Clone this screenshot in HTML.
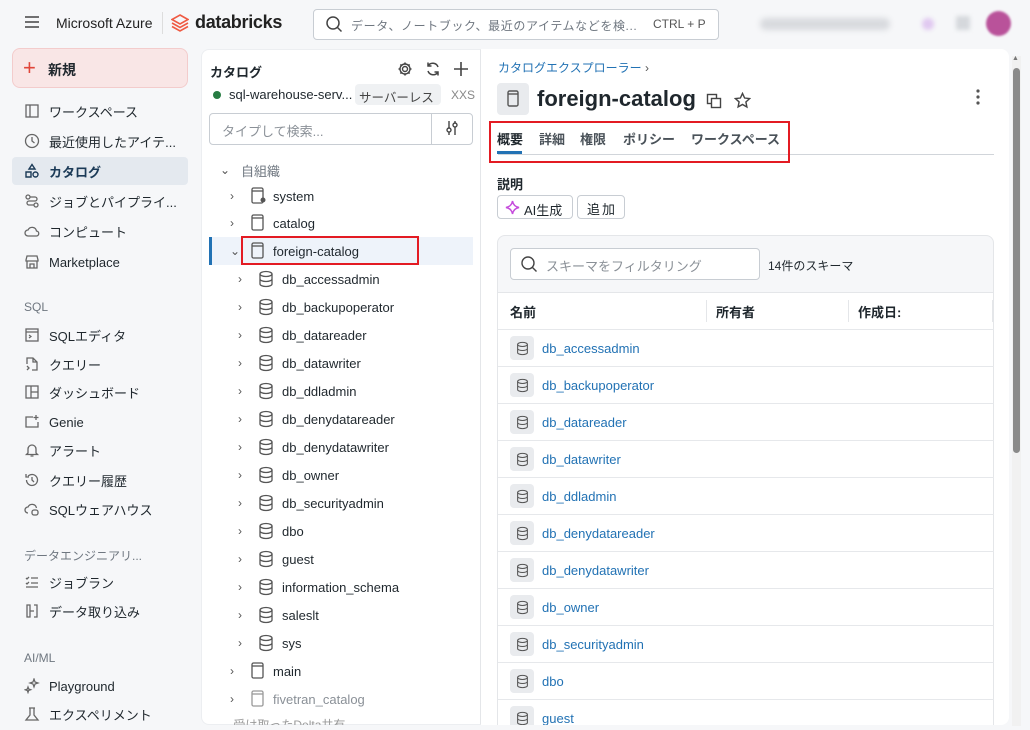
<!DOCTYPE html>
<html><head><meta charset="utf-8"><style>
*{box-sizing:border-box;margin:0;padding:0}
html,body{width:1030px;height:730px;overflow:hidden}
body{background:#f6f7f9;font-family:"Liberation Sans","Noto Sans CJK JP",sans-serif;font-size:13px;color:#1f272d;position:relative}
.a{position:absolute}
.nav{position:absolute;left:12px;width:176px;height:28px;display:flex;align-items:center;padding-left:12px;gap:9px;font-size:13px;color:#1f272d}
.nav svg{width:16px;height:16px;flex:none}
.sec{position:absolute;left:24px;font-size:12px;color:#6f7780}
.tr{position:absolute;height:28px;display:flex;align-items:center;font-size:13px;color:#1f272d;white-space:nowrap}
.chev{width:21px;color:#555;font-size:12px;flex:none}
.ico{width:22px;display:flex;flex:none}
.row{position:absolute;left:0;width:496px;height:37px;border-top:1px solid #e6e8eb;display:flex;align-items:center;padding-left:12px}
.row .ic{width:24px;height:24px;background:#e9ebee;border-radius:4px;margin-right:8px;display:flex;align-items:center;justify-content:center}
.row span{color:#2272b4;font-size:13px}
</style></head><body>
<svg class="a" style="left:25px;top:16px" width="14" height="12"><path d="M0 1h14M0 6h14M0 11h14" stroke="#444" stroke-width="1.5"/></svg>
<div class="a" style="left:56px;top:15px;font-size:14px;color:#222">Microsoft Azure</div>
<div class="a" style="left:162px;top:12px;width:1px;height:22px;background:#ddd"></div>
<svg class="a" style="left:171px;top:14px" width="18" height="18" viewBox="0 0 18 18"><path d="M9 1L17 5.5 9 10 1 5.5Z M1 9l8 4.5 8-4.5 M1 12.5l8 4.5 8-4.5" fill="none" stroke="#ef5a43" stroke-width="1.6"/></svg>
<div class="a" style="left:195px;top:12px;font-size:18px;font-weight:bold;color:#222;letter-spacing:-0.3px">databricks</div>
<div class="a" style="left:313px;top:9px;width:406px;height:31px;background:#fff;border:1px solid #c8cdd3;border-radius:4px"></div>
<svg class="a" style="left:326px;top:16px" width="17" height="17"><circle cx="7" cy="7" r="6" fill="none" stroke="#444" stroke-width="1.5"/><path d="M11.5 11.5l4 4" stroke="#444" stroke-width="1.5"/></svg>
<div class="a" style="left:351px;top:17px;font-size:12px;color:#6f7780;letter-spacing:0.6px">データ、ノートブック、最近のアイテムなどを検...</div>
<div class="a" style="left:653px;top:17px;font-size:12px;color:#555">CTRL + P</div>
<div class="a" style="left:760px;top:18px;width:130px;height:12px;background:#d8dade;border-radius:6px;filter:blur(3px)"></div>
<div class="a" style="left:922px;top:18px;width:12px;height:12px;background:#e0c8f0;border-radius:6px;filter:blur(2px)"></div>
<div class="a" style="left:956px;top:16px;width:14px;height:14px;background:#d5d8dc;border-radius:2px;filter:blur(2px)"></div>
<div class="a" style="left:986px;top:11px;width:25px;height:25px;background:#b9529a;border-radius:50%;filter:blur(1px)"></div>

<div class="a" style="left:12px;top:48px;width:176px;height:40px;background:#f9e6e6;border:1px solid #f3cccc;border-radius:8px"></div>
<div class="a" style="left:23px;top:55px;font-size:22px;color:#e0463a;font-weight:300">+</div>
<div class="a" style="left:48px;top:60px;font-size:14px;font-weight:bold">新規</div>
<div class="nav" style="top:97px"><svg viewBox="0 0 16 16"><rect x="2" y="2" width="12" height="12" fill="none" stroke="#666" stroke-width="1.3"/><path d="M6 2v12" stroke="#666" stroke-width="1.3"/></svg>ワークスペース</div>
<div class="nav" style="top:127px"><svg viewBox="0 0 16 16"><circle cx="8" cy="8" r="6.5" fill="none" stroke="#666" stroke-width="1.3"/><path d="M8 4v4l2.5 2" fill="none" stroke="#666" stroke-width="1.3"/></svg>最近使用したアイテ...</div>
<div class="nav" style="top:157px;background:#e4e9ef;border-radius:4px;font-weight:bold;color:#1b3a57"><svg viewBox="0 0 16 16"><path d="M8 1.5l3 4.5H5z M2 9h5v5H2z" fill="none" stroke="#1b3a57" stroke-width="1.4"/><circle cx="11.5" cy="11.5" r="2.5" fill="none" stroke="#1b3a57" stroke-width="1.4"/></svg>カタログ</div>
<div class="nav" style="top:187px"><svg viewBox="0 0 16 16"><circle cx="4" cy="4" r="2" fill="none" stroke="#666" stroke-width="1.3"/><circle cx="12" cy="12" r="2" fill="none" stroke="#666" stroke-width="1.3"/><path d="M6 4h5a2 2 0 010 4H5a2 2 0 000 4h5" fill="none" stroke="#666" stroke-width="1.3"/></svg>ジョブとパイプライ...</div>
<div class="nav" style="top:217px"><svg viewBox="0 0 16 16"><path d="M4 13a3 3 0 010-6 4.5 4.5 0 018.5 1A2.5 2.5 0 0112 13z" fill="none" stroke="#666" stroke-width="1.3"/></svg>コンピュート</div>
<div class="nav" style="top:248px"><svg viewBox="0 0 16 16"><path d="M2 6l1-4h10l1 4v1H2zM3 7v7h10V7M6 14v-4h4v4" fill="none" stroke="#666" stroke-width="1.3"/></svg>Marketplace</div>
<div class="sec" style="top:300px">SQL</div>
<div class="nav" style="top:321px"><svg viewBox="0 0 16 16"><rect x="2" y="2" width="12" height="12" fill="none" stroke="#666" stroke-width="1.3"/><path d="M2 5h12M5 8l2 1.5L5 11" fill="none" stroke="#666" stroke-width="1.2"/></svg>SQLエディタ</div>
<div class="nav" style="top:350px"><svg viewBox="0 0 16 16"><path d="M3 8V2h6l4 4v8H8M9 2v4h4M3 10l2 2-2 2" fill="none" stroke="#666" stroke-width="1.3"/></svg>クエリー</div>
<div class="nav" style="top:378px"><svg viewBox="0 0 16 16"><rect x="2" y="2" width="12" height="12" fill="none" stroke="#666" stroke-width="1.3"/><path d="M7 2v12M7 8h7" stroke="#666" stroke-width="1.3"/></svg>ダッシュボード</div>
<div class="nav" style="top:408px"><svg viewBox="0 0 16 16"><path d="M9 3H2v10h12V8M12 1v5M9.5 3.5h5" fill="none" stroke="#666" stroke-width="1.3"/></svg>Genie</div>
<div class="nav" style="top:436px"><svg viewBox="0 0 16 16"><path d="M4 11V7a4 4 0 018 0v4l1.5 1.5h-11zM6.5 14h3" fill="none" stroke="#666" stroke-width="1.3"/></svg>アラート</div>
<div class="nav" style="top:466px"><svg viewBox="0 0 16 16"><path d="M2.5 8a5.5 5.5 0 101.6-3.9M2 2v3h3M8 5v3l2 2" fill="none" stroke="#666" stroke-width="1.3"/></svg>クエリー履歴</div>
<div class="nav" style="top:495px"><svg viewBox="0 0 16 16"><path d="M4 12a3 3 0 010-6 4.5 4.5 0 018.5 1" fill="none" stroke="#666" stroke-width="1.3"/><rect x="8" y="9" width="6" height="5" rx="2" fill="none" stroke="#666" stroke-width="1.3"/></svg>SQLウェアハウス</div>
<div class="sec" style="top:547px">データエンジニアリ...</div>
<div class="nav" style="top:568px"><svg viewBox="0 0 16 16"><path d="M2 4l1 1 2-2M7 4h7M2 9l1 1 2-2M7 9h7M2 13h12" fill="none" stroke="#666" stroke-width="1.3"/></svg>ジョブラン</div>
<div class="nav" style="top:597px"><svg viewBox="0 0 16 16"><path d="M3 2h3v12H3zM10 2h3v12h-3M6 8h4" fill="none" stroke="#666" stroke-width="1.3"/></svg>データ取り込み</div>
<div class="sec" style="top:651px">AI/ML</div>
<div class="nav" style="top:672px"><svg viewBox="0 0 16 16"><path d="M10 1l1 3 3 1-3 1-1 3-1-3-3-1 3-1zM4 9l.7 2 2 .7-2 .7L4 14.5l-.7-2-2-.7 2-.7z" fill="none" stroke="#666" stroke-width="1.2"/></svg>Playground</div>
<div class="nav" style="top:700px"><svg viewBox="0 0 16 16"><path d="M5 2h6M6 2v7l-4 5h12l-4-5V2" fill="none" stroke="#666" stroke-width="1.3"/></svg>エクスペリメント</div>

<div class="a" style="left:201px;top:49px;width:280px;height:676px;background:#fff;border-radius:8px 0 0 8px;border:1px solid #eceef1;border-right:1px solid #e4e6e9"></div>
<div class="a" style="left:210px;top:62px;font-size:13px;font-weight:bold">カタログ</div>
<svg class="a" style="left:397px;top:61px" width="16" height="16" viewBox="0 0 16 16"><circle cx="8" cy="8" r="2.5" fill="none" stroke="#444" stroke-width="1.4"/><path d="M8 1.5v2M8 12.5v2M1.5 8h2M12.5 8h2M3.4 3.4l1.4 1.4M11.2 11.2l1.4 1.4M3.4 12.6l1.4-1.4M11.2 4.8l1.4-1.4" stroke="#444" stroke-width="1.6"/><circle cx="8" cy="8" r="5" fill="none" stroke="#444" stroke-width="1.4"/></svg>
<svg class="a" style="left:425px;top:61px" width="16" height="16" viewBox="0 0 16 16"><path d="M13 6a5.5 5.5 0 00-10-1M3 10a5.5 5.5 0 0010 1M3 1.5V5h3.5M13 14.5V11H9.5" fill="none" stroke="#444" stroke-width="1.5"/></svg>
<svg class="a" style="left:453px;top:61px" width="16" height="16"><path d="M8 1v14M1 8h14" stroke="#444" stroke-width="1.6"/></svg>
<div class="a" style="left:213px;top:91px;width:8px;height:8px;border-radius:50%;background:#277c43"></div>
<div class="a" style="left:229px;top:87px;font-size:13px">sql-warehouse-serv...</div>
<div class="a" style="left:355px;top:84px;width:86px;height:21px;background:#eff1f3;border-radius:4px;font-size:12.5px;color:#444;padding:3px 4px;white-space:nowrap;overflow:hidden">サーバーレス</div>
<div class="a" style="left:451px;top:88px;font-size:12px;color:#888">XXS</div>
<div class="a" style="left:209px;top:113px;width:264px;height:32px;border:1px solid #c8cdd3;border-radius:4px"></div>
<div class="a" style="left:431px;top:114px;width:1px;height:30px;background:#c8cdd3"></div>
<div class="a" style="left:222px;top:121px;font-size:13px;color:#8a9097">タイプして検索...</div>
<svg class="a" style="left:445px;top:120px" width="14" height="16"><path d="M4 1v14M10 1v14" stroke="#444" stroke-width="1.4"/><circle cx="4" cy="10" r="2" fill="#fff" stroke="#444" stroke-width="1.4"/><circle cx="10" cy="5" r="2" fill="#fff" stroke="#444" stroke-width="1.4"/></svg>
<div class="tr" style="left:220px;top:156px"><span class="chev" style="width:21px">⌄</span><span style="color:#6f7780">自組織</span></div>
<div class="tr" style="left:230px;top:182px"><span class="chev">›</span><span class="ico"><svg width="16" height="18"><rect x="1" y="1" width="11" height="15" rx="1.5" fill="none" stroke="#555" stroke-width="1.3"/><path d="M1 4h11" stroke="#555" stroke-width="1.3"/><circle cx="12" cy="13" r="2.5" fill="#555"/></svg></span>system</div>
<div class="tr" style="left:230px;top:209px"><span class="chev">›</span><span class="ico"><svg width="16" height="18"><rect x="1" y="1" width="11" height="15" rx="1.5" fill="none" stroke="#555" stroke-width="1.3"/><path d="M1 4h11" stroke="#555" stroke-width="1.3"/></svg></span>catalog</div>
<div class="a" style="left:209px;top:237px;width:264px;height:28px;background:#eef3fa"></div>
<div class="a" style="left:209px;top:237px;width:3px;height:28px;background:#2272b4"></div>
<div class="a" style="left:241px;top:236px;width:178px;height:29px;border:2px solid #e31b23"></div>
<div class="tr" style="left:230px;top:237px"><span class="chev">⌄</span><span class="ico"><svg width="16" height="18"><rect x="1" y="1" width="11" height="15" rx="1.5" fill="none" stroke="#555" stroke-width="1.3"/><path d="M1 4h11" stroke="#555" stroke-width="1.3"/></svg></span>foreign-catalog</div>
<div id="dbs"></div>
<div class="tr" style="left:230px;top:657px"><span class="chev">›</span><span class="ico"><svg width="16" height="18"><rect x="1" y="1" width="11" height="15" rx="1.5" fill="none" stroke="#555" stroke-width="1.3"/><path d="M1 4h11" stroke="#555" stroke-width="1.3"/></svg></span>main</div>
<div class="tr" style="left:230px;top:685px;color:#8a9097"><span class="chev">›</span><span class="ico"><svg width="16" height="18"><rect x="1" y="1" width="11" height="15" rx="1.5" fill="none" stroke="#999" stroke-width="1.3"/><path d="M1 4h11" stroke="#999" stroke-width="1.3"/></svg></span>fivetran_catalog</div>
<div class="a" style="left:220px;top:716px;font-size:12px;color:#999;height:9px;overflow:hidden">⌄ 受け取ったDelta共有</div>

<div class="a" style="left:481px;top:49px;width:528px;height:676px;background:#fff;border-radius:0 8px 8px 0"></div>
<div class="a" style="left:1012px;top:56px;width:9px;height:670px;background:#f1f1f1"></div>
<div class="a" style="left:1013px;top:68px;width:7px;height:385px;background:#8a8a8a;border-radius:4px"></div>
<div class="a" style="left:1012px;top:55px;font-size:7px;color:#777">▲</div>
<div class="a" style="left:498px;top:59px;font-size:12px;color:#2272b4">カタログエクスプローラー <span style="color:#555">›</span></div>
<div class="a" style="left:497px;top:83px;width:32px;height:32px;background:#e9ebee;border-radius:4px"></div>
<svg class="a" style="left:505px;top:89px" width="16" height="20"><rect x="3" y="2" width="10" height="15" rx="1.5" fill="none" stroke="#555" stroke-width="1.4"/><path d="M3 5h10" stroke="#555" stroke-width="1.4"/></svg>
<div class="a" style="left:537px;top:86px;font-size:22px;font-weight:bold;color:#1f272d">foreign-catalog</div>
<svg class="a" style="left:706px;top:93px" width="16" height="16"><rect x="1.5" y="1.5" width="9" height="9" fill="none" stroke="#444" stroke-width="1.4"/><rect x="5.5" y="5.5" width="9" height="9" fill="#fff" stroke="#444" stroke-width="1.4"/></svg>
<svg class="a" style="left:734px;top:92px" width="17" height="17" viewBox="0 0 24 24"><path d="M12 2l3 6.5 7 .8-5.2 4.8 1.4 7L12 17.6 5.8 21l1.4-7L2 9.3l7-.8z" fill="none" stroke="#444" stroke-width="2"/></svg>
<svg class="a" style="left:975px;top:89px" width="6" height="16"><circle cx="3" cy="2" r="1.6" fill="#555"/><circle cx="3" cy="8" r="1.6" fill="#555"/><circle cx="3" cy="14" r="1.6" fill="#555"/></svg>
<div class="a" style="left:498px;top:154px;width:496px;height:1px;background:#d1d5da"></div>
<div class="a" style="left:497px;top:129px;font-size:13px;font-weight:bold;color:#1f272d">概要</div>
<div class="a" style="left:497px;top:151px;width:25px;height:3px;background:#2272b4"></div>
<div class="a" style="left:539px;top:129px;font-size:13px;font-weight:bold;color:#4a5259">詳細</div>
<div class="a" style="left:580px;top:129px;font-size:13px;font-weight:bold;color:#4a5259">権限</div>
<div class="a" style="left:623px;top:129px;font-size:13px;font-weight:bold;color:#4a5259">ポリシー</div>
<div class="a" style="left:691px;top:129px;font-size:13px;font-weight:bold;color:#4a5259">ワークスペース</div>
<div class="a" style="left:489px;top:121px;width:301px;height:42px;border:2px solid #e31b23"></div>
<div class="a" style="left:497px;top:174px;font-size:13px;font-weight:bold">説明</div>
<div class="a" style="left:497px;top:195px;width:76px;height:24px;border:1px solid #c8cdd3;border-radius:4px"></div>
<svg class="a" style="left:505px;top:200px" width="15" height="15" viewBox="0 0 16 16"><path d="M8 1Q9 7 15 8 9 9 8 15 7 9 1 8 7 7 8 1Z" fill="none" stroke="#c54bdc" stroke-width="1.6"/></svg>
<div class="a" style="left:524px;top:200px;font-size:13px">AI生成</div>
<div class="a" style="left:577px;top:195px;width:48px;height:24px;border:1px solid #c8cdd3;border-radius:4px;font-size:13px;padding:3px 0 0 9px;letter-spacing:2px">追加</div>
<div class="a" style="left:497px;top:235px;width:497px;height:490px;border:1px solid #e4e6e9;border-bottom:none;border-radius:8px 8px 0 0;background:#f6f7f9"></div>
<div class="a" style="left:510px;top:248px;width:250px;height:32px;background:#fff;border:1px solid #c8cdd3;border-radius:4px"></div>
<svg class="a" style="left:521px;top:256px" width="17" height="17"><circle cx="7" cy="7" r="6" fill="none" stroke="#444" stroke-width="1.4"/><path d="M11.5 11.5l4 4" stroke="#444" stroke-width="1.4"/></svg>
<div class="a" style="left:546px;top:256px;font-size:13px;color:#8a9097">スキーマをフィルタリング</div>
<div class="a" style="left:768px;top:257px;font-size:12px;color:#1f272d">14件のスキーマ</div>
<div class="a" style="left:498px;top:292px;width:495px;height:433px;background:#fff;border-top:1px solid #e4e6e9"></div>
<div class="a" style="left:510px;top:302px;font-size:13px;font-weight:bold">名前</div>
<div class="a" style="left:706px;top:300px;width:1px;height:22px;background:#e4e6e9"></div>
<div class="a" style="left:716px;top:302px;font-size:13px;font-weight:bold">所有者</div>
<div class="a" style="left:848px;top:300px;width:1px;height:22px;background:#e4e6e9"></div>
<div class="a" style="left:858px;top:302px;font-size:13px;font-weight:bold">作成日:</div>
<div class="a" style="left:992px;top:300px;width:1px;height:22px;background:#e4e6e9"></div>
<div class="a" style="left:498px;top:329px;width:496px;height:396px;overflow:hidden"><div id="rows"></div></div>
<script>
var n=["db_accessadmin","db_backupoperator","db_datareader","db_datawriter","db_ddladmin","db_denydatareader","db_denydatawriter","db_owner","db_securityadmin","dbo","guest","information_schema","saleslt","sys"];
var ic='<svg width="16" height="18"><ellipse cx="8" cy="4" rx="6" ry="2.5" fill="none" stroke="#555" stroke-width="1.3"/><path d="M2 4v10c0 1.4 2.7 2.5 6 2.5s6-1.1 6-2.5V4M2 9c0 1.4 2.7 2.5 6 2.5S14 10.4 14 9" fill="none" stroke="#555" stroke-width="1.3"/></svg>';
var h="",r="";
n.forEach(function(s,i){h+='<div class="tr" style="left:238px;top:'+(265+i*28)+'px"><span class="chev" style="width:20px">›</span><span class="ico" style="width:24px">'+ic+'</span>'+s+'</div>';
if(i<11)r+='<div class="row" style="top:'+(i*37)+'px"><div class="ic">'+ic.replace('width="16" height="18"','width="13" height="15" viewBox="0 0 16 18"')+'</div><span>'+s+'</span></div>';});
document.getElementById("dbs").outerHTML=h;document.getElementById("rows").outerHTML=r;
</script>
</body></html>
